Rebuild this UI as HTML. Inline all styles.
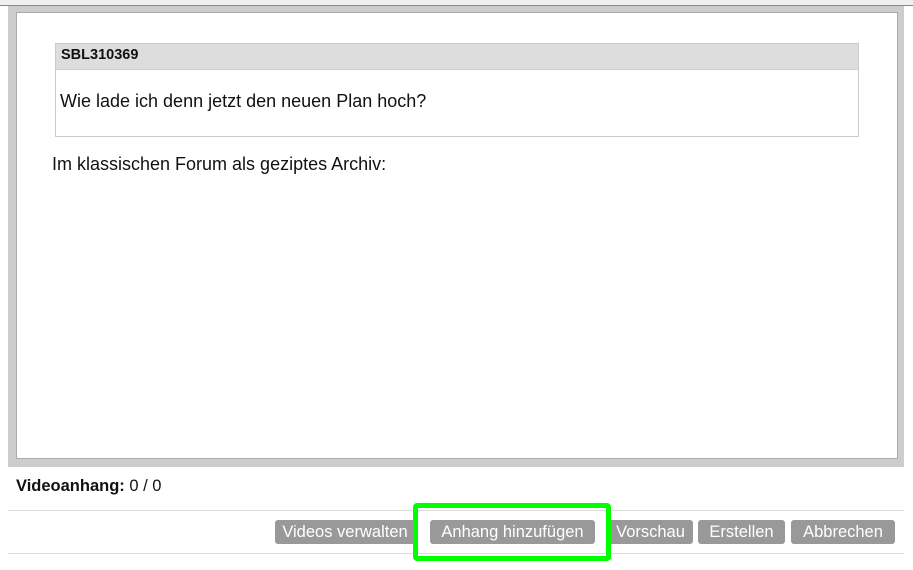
<!DOCTYPE html>
<html><head><style>
body{margin:0;width:913px;height:570px;background:#fff;font-family:"Liberation Sans",Arial,sans-serif;position:relative;overflow:hidden}
.a{position:absolute}
.btn{position:absolute;top:520px;height:24px;background:#999;color:#fff;font-size:16.5px;line-height:25px;text-align:center;border-radius:3px;white-space:nowrap}
</style></head><body>
<div class="a" style="left:0;top:0;width:913px;height:5px;background:#f0f0f0;border-bottom:1px solid #888"></div>
<div class="a" style="left:8px;top:6px;width:896px;height:461px;background:#cdcdcd"></div>
<div class="a" style="left:16px;top:12px;width:880px;height:445px;background:#fff;border:1px solid #aaa"></div>
<div class="a" style="left:55px;top:43px;width:802px;height:92px;border:1px solid #ccc;background:#fff"></div>
<div class="a" style="left:56px;top:44px;width:802px;height:25px;background:#ddd;border-bottom:1px solid #ccc"></div>
<div class="a" style="left:61px;top:47px;font-size:14.5px;font-weight:bold;color:#111">SBL310369</div>
<div class="a" style="left:60px;top:91px;font-size:18px;color:#111">Wie lade ich denn jetzt den neuen Plan hoch?</div>
<div class="a" style="left:52px;top:154px;font-size:18px;color:#111">Im klassischen Forum als geziptes Archiv:</div>
<div class="a" style="left:16px;top:477px;font-size:16.5px;color:#111"><b>Videoanhang:</b> 0 / 0</div>
<div class="a" style="left:8px;top:510px;width:896px;height:1px;background:#ddd"></div>
<div class="a" style="left:8px;top:553px;width:896px;height:1px;background:#ddd"></div>
<div class="btn" style="left:275px;width:140px">Videos verwalten</div>
<div class="btn" style="left:430px;width:165px">Anhang hinzufügen</div>
<div class="btn" style="left:608px;width:85px">Vorschau</div>
<div class="btn" style="left:698px;width:87px">Erstellen</div>
<div class="btn" style="left:791px;width:104px">Abbrechen</div>
<div class="a" style="left:413px;top:503px;width:188px;height:48px;border:5px solid #00ff00;border-radius:4px"></div>
</body></html>
